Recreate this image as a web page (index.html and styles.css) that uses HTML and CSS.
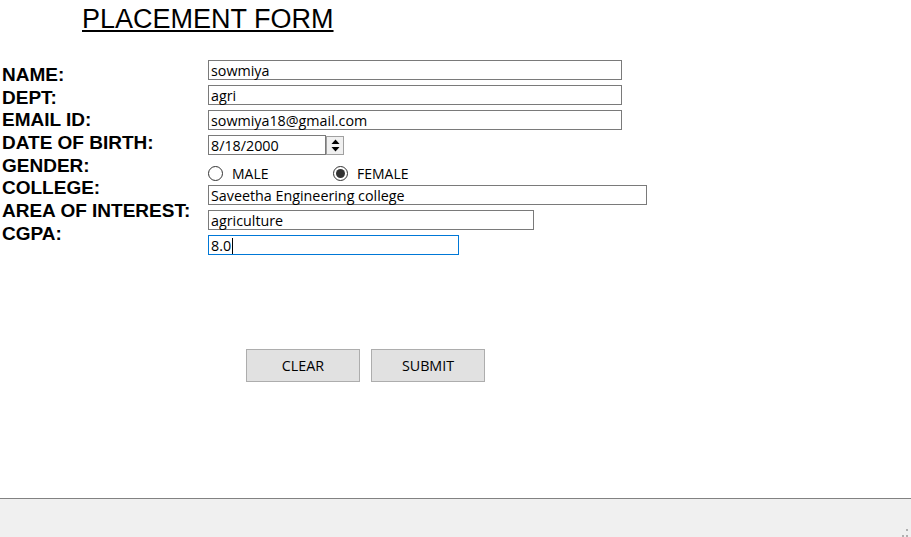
FILE: index.html
```html
<!DOCTYPE html>
<html>
<head>
<meta charset="utf-8">
<title>Placement Form</title>
<link rel="stylesheet" href="styles.css">
</head>
<body>
<div class="window">
  <div class="content">
    <h1 class="title">PLACEMENT FORM</h1>
    <div class="form">
      <div class="labels">
        <div class="lbl">NAME:</div>
        <div class="lbl">DEPT:</div>
        <div class="lbl">EMAIL ID:</div>
        <div class="lbl">DATE OF BIRTH:</div>
        <div class="lbl">GENDER:</div>
        <div class="lbl">COLLEGE:</div>
        <div class="lbl">AREA OF INTEREST:</div>
        <div class="lbl">CGPA:</div>
      </div>
      <div class="fields">
        <div class="tb w-long">sowmiya</div>
        <div class="tb w-long">agri</div>
        <div class="tb w-long">sowmiya18@gmail.com</div>
        <div class="date">
          <div class="tb date-text">8/18/2000</div>
          <div class="spin">
            <span class="spin-btn"><svg width="9" height="5" viewBox="0 0 9 5"><path d="M0.5 5 L4.5 0.5 L8.5 5 Z" fill="#000"/></svg></span>
            <span class="spin-btn"><svg width="9" height="5" viewBox="0 0 9 5"><path d="M0.5 0 L4.5 4.5 L8.5 0 Z" fill="#000"/></svg></span>
          </div>
        </div>
        <div class="radios">
          <label class="radio"><span class="circle"></span><span class="rtext">MALE</span></label>
          <label class="radio"><span class="circle checked"></span><span class="rtext">FEMALE</span></label>
        </div>
        <div class="tb w-college">Saveetha Engineering college</div>
        <div class="tb w-area">agriculture</div>
        <div class="tb w-cgpa focused">8.0<span class="caret"></span></div>
      </div>
    </div>
    <div class="buttons">
      <button class="btn">CLEAR</button>
      <button class="btn">SUBMIT</button>
    </div>
  </div>
  <div class="statusbar"><span class="grip"></span></div>
</div>
</body>
</html>
```
FILE: styles.css
```css
html, body {
  margin: 0;
  padding: 0;
  background: #ffffff;
}
.window {
  width: 911px;
  height: 537px;
  display: flex;
  flex-direction: column;
  overflow: hidden;
}
.content {
  height: 498px;
  flex: none;
}
.title {
  margin: 0;
  padding: 4px 0 0 82px;
  font-family: "Liberation Sans", Arial, sans-serif;
  font-weight: normal;
  font-size: 27px;
  line-height: 30px;
  text-decoration: underline;
  text-decoration-thickness: 2px;
  text-underline-offset: 2px;
  color: #000;
}
.form {
  display: flex;
  margin-top: 26px;
}
.labels {
  width: 206px;
  padding-left: 2px;
  padding-top: 4px;
  display: flex;
  flex-direction: column;
}
.lbl {
  font-family: "Liberation Sans", Arial, sans-serif;
  font-weight: bold;
  font-size: 19px;
  line-height: 22.7px;
  height: 22.7px;
  color: #000;
  white-space: nowrap;
}
.fields {
  display: flex;
  flex-direction: column;
  gap: 5px;
}
.tb {
  box-sizing: border-box;
  height: 20px;
  border: 1px solid #7a7a7a;
  padding: 2px 2px 0;
  font-family: "Open Sans", "Noto Sans", sans-serif;
  font-size: 14.3px;
  line-height: 18px;
  color: #000;
  white-space: nowrap;
  display: flex;
  align-items: center;
}
.w-long { width: 414px; }
.w-college { width: 439px; }
.w-area { width: 326px; }
.w-cgpa { width: 251px; }
.focused { border-color: #0078d7; }
.caret {
  display: inline-block;
  width: 1px;
  height: 16px;
  background: #000;
  margin-left: 1px;
}
.date {
  display: flex;
  width: 136px;
  height: 20px;
}
.date-text {
  width: 118px;
}
.spin {
  box-sizing: border-box;
  width: 18px;
  height: 19px;
  margin-top: 1px;
  border: 1px solid #a0a0a0;
  background: #f0f0f0;
  display: flex;
  flex-direction: column;
}
.spin-btn {
  flex: 1;
  display: flex;
  align-items: center;
  justify-content: center;
}
.radios {
  height: 20px;
  display: flex;
  align-items: flex-end;
}
.radio {
  display: flex;
  align-items: center;
  width: 125px;
  height: 16px;
  margin-bottom: -1px;
}
.circle {
  box-sizing: border-box;
  width: 15px;
  height: 15px;
  border: 1px solid #333;
  border-radius: 50%;
  display: flex;
  align-items: center;
  justify-content: center;
  flex: none;
}
.circle.checked::after {
  content: "";
  width: 9px;
  height: 9px;
  border-radius: 50%;
  background: #333;
}
.rtext {
  margin-left: 9px;
  font-family: "Open Sans", "Noto Sans", sans-serif;
  font-size: 14px;
  color: #000;
}
.buttons {
  display: flex;
  gap: 11px;
  margin: 94px 0 0 246px;
}
.btn {
  box-sizing: border-box;
  width: 114px;
  height: 33px;
  background: #e1e1e1;
  border: 1px solid #adadad;
  border-radius: 0;
  padding: 0;
  font-family: "Open Sans", "Noto Sans", sans-serif;
  font-size: 14.3px;
  color: #000;
}
.statusbar {
  flex: 1;
  background: #f0f0f0;
  border-top: 1px solid #828282;
  position: relative;
}
.grip {
  position: absolute;
  right: 3px;
  bottom: 0;
  width: 6px;
  height: 8px;
  background:
    linear-gradient(#b0b0b0, #b0b0b0) 4px 0 / 2px 2px no-repeat,
    linear-gradient(#b0b0b0, #b0b0b0) 0 6px / 2px 2px no-repeat,
    linear-gradient(#b0b0b0, #b0b0b0) 4px 6px / 2px 2px no-repeat;
}
```
